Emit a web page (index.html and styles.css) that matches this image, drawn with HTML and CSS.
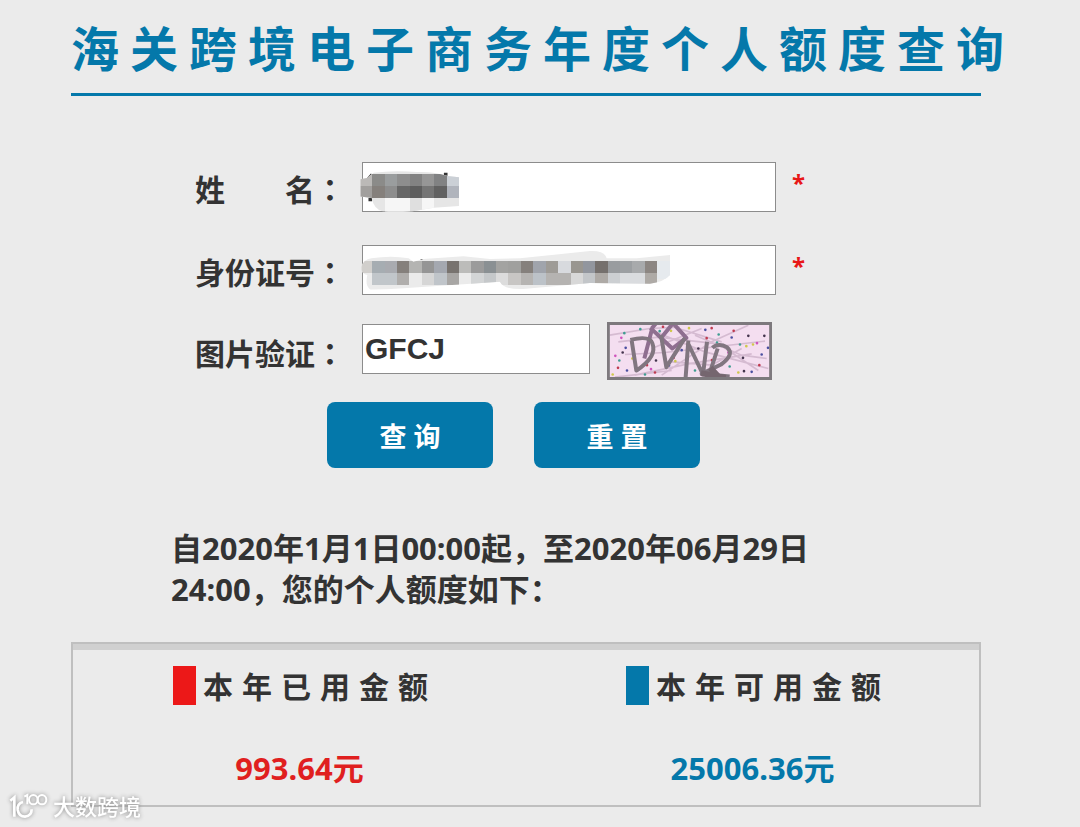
FILE: index.html
```
<!DOCTYPE html>
<html lang="zh-CN">
<head>
<meta charset="utf-8">
<meta name="viewport" content="width=device-width, initial-scale=1">
<title>海关跨境电子商务年度个人额度查询</title>
<link rel="stylesheet" href="styles.css">
</head>
<body>
<main class="page">
  <h1 class="title">海关跨境电子商务年度个人额度查询</h1>

  <form class="query">
    <div class="row">
      <label class="label" for="name">姓　　名<span class="colon" lang="ja">：</span></label>
      <div class="field">
        <input class="input" id="name" type="text" required>
        <svg class="mask mask-name" viewBox="536 60 304 154" aria-hidden="true">
          <clipPath id="clip-name"><path d="M540 88l20-4 20-16q60-8 130-2 50-2 92 12l35 4v86l-76 6-64 10q-60 4-90 0-26-6-33-40l-34-4z"/></clipPath>
          <path d="M560 92l16-18M797 68v9M570 144v10" stroke="#333" stroke-width="11" fill="none"/>
          <g clip-path="url(#clip-name)" shape-rendering="crispEdges">
            <path fill="#e6e6e6" d="M536 60h304v154H536z"/>
            <path fill="#bbb9b7" d="M536 71h40v37h-40z"/><path fill="#a19f9d" d="M536 108h40v36h-40z"/>
            <path fill="#8b8b89" d="M576 71h37v37h-37z"/><path fill="#9a9d9e" d="M613 71h38v37h-38z"/>
            <path fill="#8e8e8e" d="M651 71h37v37h-37z"/><path fill="#828282" d="M688 71h37v37h-37z"/>
            <path fill="#969696" d="M725 71h37v37h-37z"/><path fill="#818283" d="M762 71h38v37h-38z"/><path fill="#cbd0d6" d="M800 71h40v37h-40z"/>
            <path fill="#85807c" d="M576 108h37v36h-37z"/><path fill="#8d8d8d" d="M613 108h38v36h-38z"/>
            <path fill="#676767" d="M651 108h37v36h-37z"/><path fill="#5d5d5d" d="M688 108h37v36h-37z"/>
            <path fill="#757575" d="M725 108h37v36h-37z"/><path fill="#616161" d="M762 108h38v36h-38z"/><path fill="#b0b4bc" d="M800 108h40v36h-40z"/>
            <path fill="#f6f6f6" d="M613 144h75v70h-75zM725 144h37v70h-37z"/><path fill="#dfdfdf" d="M688 144h37v70h-37z"/>
          </g>
        </svg>
      </div>
      <span class="required">*</span>
    </div>

    <div class="row">
      <label class="label" for="idno">身份证号<span class="colon" lang="ja">：</span></label>
      <div class="field">
        <input class="input" id="idno" type="text" required>
        <svg class="mask mask-id" viewBox="540 296 936 126" aria-hidden="true">
          <clipPath id="clip-id"><path d="M544 350q6-22 30-26 60-10 112 0l14 10 30-8 120-8 80 8 90-2 210-22q44-2 50 22l90 0 100-10v60q-20 22-60 26l-180-2-200 18q-60 2-70-22l-110 8-180 12q-50 4-98 4-18-10-10-44-16-4-18-16z"/></clipPath>
          <path d="M722 330h12M1010 390h12" stroke="#333" stroke-width="8"/>
          <g clip-path="url(#clip-id)" shape-rendering="crispEdges">
            <path fill="#ebebeb" d="M540 296h936v126H540z"/>
            <path fill="#d1cfcc" d="M540 331h36v38h-36z"/>
            <path fill="#a6adb2" d="M576 331h38v38h-38z"/><path fill="#a9abb0" d="M614 331h37v38h-37z"/><path fill="#85807c" d="M651 331h37v38h-37z"/>
            <path fill="#b4b4b2" d="M688 331h37v38h-37z"/><path fill="#959595" d="M725 331h37v38h-37z"/><path fill="#a4a8b0" d="M762 331h38v38h-38z"/>
            <path fill="#78736f" d="M800 331h37v38h-37z"/><path fill="#bcbcba" d="M837 331h37v38h-37z"/><path fill="#9b9b9b" d="M874 331h37v38h-37z"/>
            <path fill="#8a9093" d="M911 331h37v38h-37z"/><path fill="#a3a3a1" d="M948 331h37v38h-37z"/><path fill="#a0a09e" d="M985 331h38v38h-38z"/>
            <path fill="#85807c" d="M1023 331h37v38h-37z"/><path fill="#a0a4ac" d="M1060 331h38v38h-38z"/><path fill="#9e9b96" d="M1098 331h36v38h-36z"/>
            <path fill="#d8dade" d="M1134 331h38v38h-38z"/><path fill="#999690" d="M1172 331h37v38h-37z"/><path fill="#92969e" d="M1209 331h37v38h-37z"/>
            <path fill="#75706d" d="M1246 331h37v38h-37z"/><path fill="#999c9f" d="M1283 331h37v38h-37z"/><path fill="#9c9fa2" d="M1320 331h37v38h-37z"/>
            <path fill="#a8aaac" d="M1357 331h38v38h-38z"/><path fill="#8c8682" d="M1395 331h37v38h-37z"/><path fill="#e6eaee" d="M1432 331h44v54h-44z"/>
            <path fill="#c1c6ca" d="M576 369h75v36h-75z"/><path fill="#b0aeac" d="M651 369h37v36h-37z"/><path fill="#d6d6d6" d="M725 369h37v36h-37z"/>
            <path fill="#c0c5ca" d="M762 369h38v36h-38z"/><path fill="#a8a6a4" d="M800 369h37v36h-37z"/><path fill="#d3d5d6" d="M874 369h37v36h-37z"/>
            <path fill="#c5c8ca" d="M911 369h37v36h-37z"/><path fill="#dcdcdc" d="M948 369h37v36h-37z"/><path fill="#c8c6c4" d="M985 369h38v36h-38z"/>
            <path fill="#b6b4b2" d="M1023 369h37v36h-37z"/><path fill="#bcc2c8" d="M1060 369h38v36h-38z"/><path fill="#b5b3b1" d="M1098 369h74v36h-74z"/>
            <path fill="#d8d8d8" d="M1172 369h37v36h-37z"/><path fill="#c3c6c9" d="M1209 369h37v36h-37z"/><path fill="#aeaaa6" d="M1246 369h37v36h-37z"/>
            <path fill="#cccfd2" d="M1283 369h37v36h-37z"/><path fill="#dadcdf" d="M1320 369h75v36h-75z"/><path fill="#aeaaa6" d="M1395 369h37v36h-37z"/>
          </g>
        </svg>
      </div>
      <span class="required">*</span>
    </div>

    <div class="row">
      <label class="label" for="code">图片验证<span class="colon" lang="ja">：</span></label>
      <div class="code">
        <input class="input input-code" id="code" type="text" value="GFCJ" required>
        <svg class="captcha" viewBox="36 31 495 173" role="img" aria-label="验证码">
          <path fill="#f4def0" d="M36 31h495v173H36z"/>
          <g fill="none" stroke="#8d6b8b" stroke-opacity=".3" stroke-width="5">
            <path d="M44 70l120-20 90-4M70 90l120-14 180 20 120 80M90 128l120-6 300-34M120 190l160-34 190-30M200 190l150-100 110-50M180 60l150 60 190 50M250 50l130 40M170 110l150-60M230 150l120 10 90-50M60 196l170-20M300 70l140 60 75 10"/>
          </g>
          <g fill="none" stroke-linecap="round" stroke-width="8">
            <path stroke="#c03a50" d="M204 45h0M350 49h0M69 168h0M335 79h0M156 160h0M416 57h0M236 138h0M351 145h0M180 182h0M493 160h0"/>
            <path stroke="#3f9d91" d="M88 64h0M194 58h0M136 52h0M371 68h0M404 164h0M366 92h0M73 146h0M300 176h0M435 98h0M150 188h0"/>
            <path stroke="#4a4fa0" d="M92 108h0M331 54h0M96 176h0M222 161h0M500 128h0M410 77h0M519 108h0M470 180h0M260 115h0M130 174h0"/>
            <path stroke="#cfc84b" d="M228 57h0M282 49h0M53 188h0M454 103h0M356 188h0M474 98h0M112 140h0M241 148h0M430 182h0"/>
            <path stroke="#44344d" d="M444 138h0M508 72h0M183 146h0M83 122h0M447 178h0M310 110h0M460 72h0"/>
            <path stroke="#cf54bd" d="M79 78h0M247 102h0M326 164h0M400 122h0M61 132h0M486 94h0M168 172h0"/>
          </g>
          <g fill="none" stroke-width="12" stroke-linejoin="round">
            <path stroke="#8f6f90" d="M148 140l24-92 10-12M166 48l66 62 42-32-40-44-34 42"/>
            <path stroke="#817680" d="M106 84q58-14 66 10 16 40-48 82l-14-90M198 70l16 96 56-88M272 196l8-110M278 92l46 96 12-98M352 108q18-16 44-2 24 22-18 52l-58 28 84 8M368 110l-24 74"/>
            <path stroke="#75666f" stroke-width="18" d="M318 184l74 14M346 168l26 28"/>
          </g>
          <path fill="none" stroke="#7d797d" stroke-width="9" d="M40 35h487v165H40z"/>
        </svg>
      </div>
    </div>

    <div class="actions">
      <button class="btn" type="submit">查询</button>
      <button class="btn" type="reset">重置</button>
    </div>
  </form>

  <p class="period">自2020年1月1日00:00起，至2020年06月29日24:00，您的个人额度如下：</p>

  <dl class="quota">
    <div class="quota-item used">
      <dt class="quota-name">本年已用金额</dt>
      <dd class="quota-value">993.64元</dd>
    </div>
    <div class="quota-item available">
      <dt class="quota-name">本年可用金额</dt>
      <dd class="quota-value">25006.36元</dd>
    </div>
  </dl>
</main>

<div class="watermark">
  <svg class="watermark-logo" viewBox="26 36 120 84" aria-hidden="true">
    <g fill="none" stroke="#fff" stroke-width="8">
      <path d="M30 62l12-10v58M68 66q-18 4-16 24 4 20 22 20 20-2 20-22"/>
      <path stroke-width="6" d="M72 50l9-5v28"/>
      <ellipse stroke-width="6" cx="99" cy="59" rx="13" ry="14"/>
      <ellipse stroke-width="6" cx="125" cy="59" rx="13" ry="14"/>
    </g>
  </svg>
  <span>大数跨境</span>
</div>
</body>
</html>
```

FILE: styles.css
```
* {
  box-sizing: border-box;
}

body {
  position: relative;
  margin: 0;
  background: #ebebeb;
  color: #333;
  font-family: "Noto Sans", "Noto Sans CJK SC", sans-serif;
  font-size: 30px;
  font-weight: 700;
  line-height: 41px;
}

.page {
  padding: 20px 99px 20px 71px;
}

.title {
  margin: 0;
  padding-bottom: 21px;
  border-bottom: 3px solid #0478aa;
  color: #0478aa;
  font-family: "Noto Sans CJK SC", sans-serif;
  font-size: 48px;
  line-height: 52px;
  letter-spacing: 11px;
  white-space: nowrap;
}

.query {
  padding: 66px 0 0 124px;
}

.row {
  display: flex;
  align-items: center;
  margin-bottom: 33px;
}

.row:nth-child(2) {
  margin-bottom: 27px;
}

.row:nth-child(3) {
  margin-bottom: 22px;
}

.label {
  flex: none;
  width: 167px;
  padding-top: 4px;
}

.colon {
  display: inline-block;
  font-family: "Noto Sans CJK JP", sans-serif;
}

.field {
  position: relative;
  flex: 0 1 414px;
}

.input {
  display: block;
  width: 100%;
  height: 50px;
  padding: 0 2px;
  border: 1px solid #8c8c8c;
  border-radius: 0;
  outline: none;
  background: #fff;
  color: #333;
  font: 700 30px "Liberation Sans", sans-serif;
}

.mask {
  position: absolute;
  pointer-events: none;
}

.mask-name {
  top: 8px;
  left: -3px;
  width: 101px;
}

.mask-id {
  top: 4px;
  left: -2px;
  width: 312px;
}

.required {
  margin-left: 16px;
  padding-bottom: 9px;
  color: #e81717;
  font-size: 24px;
}

.code {
  display: flex;
  flex: 0 1 410px;
  align-items: center;
  gap: 17px;
}

.input-code {
  flex: 0 1 228px;
  min-width: 0;
  margin-bottom: 4px;
}

.captcha {
  flex: none;
  width: 165px;
  height: 58px;
}

.actions {
  display: flex;
  gap: 41px;
  padding-left: 132px;
}

.btn {
  width: 166px;
  height: 66px;
  padding: 1px 0 0 7px;
  border: 0;
  border-radius: 8px;
  background: #0478aa;
  color: #fff;
  font: 700 27px "Noto Sans CJK SC", sans-serif;
  letter-spacing: 7px;
}

.period {
  margin: 60px 0 32px;
  padding: 0 140px 0 100px;
  font-size: 31px;
}

.quota {
  display: grid;
  grid-template-columns: 1fr 1fr;
  margin: 0;
  padding: 22px 0 16px;
  border: 2px solid #bfbfbf;
  box-shadow: inset 0 6px #d0d0d0;
}

.quota-name {
  display: flex;
  gap: 7px;
  padding-left: 100px;
  letter-spacing: 9px;
  white-space: nowrap;
}

.quota-name::before {
  width: 23px;
  height: 39px;
  background: currentColor;
  content: "";
}

.used .quota-name::before {
  background: #ec1818;
}

.available .quota-name::before {
  background: #0478aa;
}

.quota-value {
  margin: 41px 0 0;
  font-size: 31px;
  text-align: center;
}

.used .quota-value {
  color: #e01f1f;
}

.available .quota-value {
  color: #0478aa;
}

.watermark {
  position: absolute;
  bottom: 6px;
  left: 9px;
  display: flex;
  align-items: center;
  gap: 4px;
  color: #fff;
  font-size: 22px;
  font-weight: 500;
  line-height: 30px;
  filter: drop-shadow(0 0 2px #888);
}

.watermark-logo {
  width: 40px;
  height: 28px;
}
```
